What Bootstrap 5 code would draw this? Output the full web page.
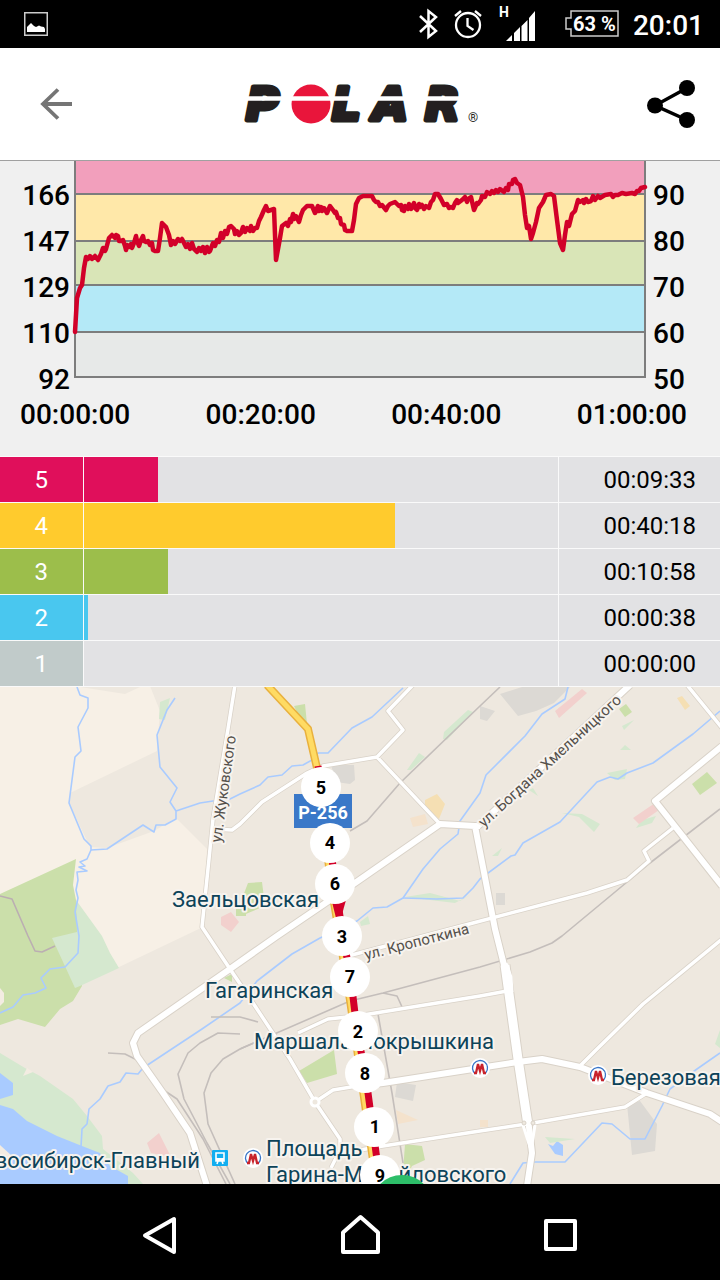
<!DOCTYPE html>
<html lang="ru">
<head>
<meta charset="utf-8">
<meta name="viewport" content="width=device-width, initial-scale=1">
<title>Polar</title>
<link rel="stylesheet" href="https://cdn.jsdelivr.net/npm/bootstrap@5.3.0/dist/css/bootstrap.min.css">
<style>
  body { font-family: Roboto, "Noto Sans", sans-serif; background: #f0f0f0; color: #000; }
  svg { display: block; }
  .status-bar { height: 48px; padding: 0 16px 0 24px; background: #000; color: #fff; }
  .status-bar svg { overflow: visible; }
  .status-time { padding-top: 3px; font-size: 28px; font-weight: 500; line-height: 32px; }
  .top-bar { height: 113px; padding: 0 24px 0 40px; background: #fff; border-bottom: 1px solid #a0a0a0; }
  .plain-btn { background: none; border: 0; padding: 0; }
  .chart-grid { display: grid; grid-template-columns: 74px 1fr 74px; height: 217px; }
  .axis-col { padding-top: 12px; font-size: 28px; font-weight: 500; line-height: 46px; }
  .axis-col.lefty { padding-right: 4px; text-align: right; }
  .axis-col.righty { padding-left: 7px; }
  .plot { width: 100%; height: 217px; overflow: visible; }
  .time-axis { height: 78px; padding: 19px 33px 0 20px; font-size: 28px; font-weight: 500; line-height: 36px; }
  .zones { width: 100%; table-layout: fixed; border-collapse: collapse; font-size: 24px; line-height: 44px; }
  .zones th, .zones td { height: 46px; padding: 0; border: solid #fafafa; border-width: 1px 0; background: #e2e2e4; }
  .zones th { width: 83px; font-weight: 400; color: #fff; text-align: center; border-right-width: 1px; background: var(--zone); }
  .zones td:last-child { width: 162px; padding-right: 24px; text-align: right; border-left-width: 1px; }
  .zone-bar { height: 45px; background: var(--zone); }
  .z5 { --zone: #e00f5b; } .z4 { --zone: #ffcb2d; } .z3 { --zone: #9cbe4b; } .z2 { --zone: #49c7ef; } .z1 { --zone: #c1cbca; }
  .map-area { flex: 1 1 0; min-height: 320px; background: #eee8df; overflow: hidden; }
  .map-area > svg { width: 100%; height: 100%; }
  .station { font-size: 22px; fill: #0d4359; stroke: #f7f3ee; stroke-width: 4px; stroke-linejoin: round; paint-order: stroke; }
  .street { font-size: 15px; fill: #54504b; stroke: #f7f3ee; stroke-width: 4px; stroke-linejoin: round; paint-order: stroke; }
  .pin { font-size: 18px; font-weight: 700; text-anchor: middle; }
  .nav-keys { height: 96px; padding: 0 100px; background: #000; }
</style>
</head>
<body class="d-flex flex-column min-vh-100">

<div class="status-bar d-flex align-items-center">
  <svg width="24" height="24" viewBox="0 0 24 24"><rect x=".75" y=".75" width="22.500" height="22.500" fill="none" stroke="#ccc" stroke-width="1.500"/><path fill="#fff" d="M3 20v-5l2-2 2-2 3 3 2 1 3-1.500 2 1 3 .5 1 2v3z"/></svg>
  <svg class="ms-auto" width="20" height="30" viewBox="0 0 20 30" fill="none" stroke="#fff" stroke-width="2.500"><path d="M1 7l16 15-7.500 6V2L17 8 1 23"/></svg>
  <svg style="margin-left:14px" width="30" height="30" viewBox="0 0 30 30" fill="none" stroke="#fff" stroke-width="2.300"><circle cx="15" cy="16" r="12"/><path d="M14.500 9v8l6 4M2 7l6-5M28 7l-6-5"/></svg>
  <svg class="ms-3" width="40" height="34" viewBox="0 0 40 34" fill="#fff"><text x="0" y="10" font-size="14" font-weight="700">H</text><path d="M7 34l6-6v6zM15 26l6-6v14h-6zM22.500 19l6-6v21h-6zM30 11l6-7v30h-6z"/></svg>
  <svg class="ms-4" width="62" height="30" viewBox="0 0 62 30"><path d="M8 2h47v25H8v-7H3V9h5z" fill="none" stroke="#ccc" stroke-width="1.500"/><text x="10" y="22" font-size="20" font-weight="700" fill="#fff">63 %</text></svg>
  <span class="status-time ms-2">20:01</span>
</div>

<header class="top-bar d-flex align-items-center justify-content-between">
  <button class="plain-btn" type="button" aria-label="Back"><svg width="32" height="32" viewBox="0 0 32 32" fill="none" stroke="#757575" stroke-width="3.800"><path d="M32 16H3M18 1.500L3 16l15 14.500"/></svg></button>
  <svg width="240" height="44" viewBox="240 82 240 44" overflow="visible" role="img" aria-label="Polar">
    <g fill="#231f20" stroke="#231f20" stroke-width="5" stroke-linejoin="round" font-family="DejaVu Sans, sans-serif" font-weight="700" font-style="italic" font-size="45">
      <text x="247" y="120">P</text><text x="333" y="120">L</text><text x="374" y="120">A</text><text x="426" y="120">R</text>
    </g>
    <circle cx="312" cy="104" r="19.500" fill="#e9153b"/>
    <path d="M240 98.500H468" stroke="#fff" stroke-width="4.500"/>
    <text x="469" y="122" font-size="13" fill="#231f20">®</text>
  </svg>
  <button class="plain-btn" type="button" aria-label="Share"><svg width="50" height="50" viewBox="0 0 50 50"><path d="M41 9L9 26.500 41 41" fill="none" stroke="#000" stroke-width="3.500"/><circle cx="41" cy="9" r="8"/><circle cx="9" cy="26.500" r="8"/><circle cx="41" cy="41" r="8"/></svg></button>
</header>

<main class="d-flex flex-column flex-grow-1">
  <section>
    <div class="chart-grid">
      <div class="axis-col lefty"><div>166</div><div>147</div><div>129</div><div>110</div><div>92</div></div>
      <svg class="plot" viewBox="74 161 572 217" preserveAspectRatio="none">
        <path fill="#f29fbc" d="M75 161h570v33H75z"/><path fill="#ffe8a9" d="M75 194h570v47H75z"/><path fill="#d9e5b7" d="M75 241h570v44H75z"/><path fill="#b4e9f7" d="M75 285h570v47H75z"/><path fill="#e7e9e8" d="M75 332h570v45H75z"/>
        <path d="M75 161V377H645V161M75 194H645M75 241H645M75 285H645M75 332H645" fill="none" stroke="#7d7d7d" stroke-width="2"/>
        <polyline fill="none" stroke="#d20029" stroke-width="4.500" stroke-linejoin="round" stroke-linecap="round" points="75,332 76,315 77,298 80,288 82,285 84,268 86,257 88,259 90,256 92,259 95,256 98,260 101,254 103,248 105,251 106,249 109,238 112,235 115,238 116,235 118,236 119,241 121,241 123,240 125,246 126,250 127,245 129,247 131,244 132,248 134,243 136,236 137,241 139,246 141,240 143,236 144,241 146,242 148,241 150,245 152,243 153,250 155,251 158,251 160,238 162,223 166,227 169,235 171,245 173,241 175,244 178,239 180,241 182,239 184,243 186,247 188,244 190,249 192,243 194,249 197,252 199,248 201,251 203,247 205,253 207,247 209,252 210,251 213,243 215,246 217,240 219,242 221,233 223,238 225,231 227,234 229,227 231,226 234,229 235,234 237,231 239,235 241,233 243,227 245,232 247,228 250,231 251,226 253,231 255,228 257,228 259,221 261,217 264,210 266,206 268,211 274,209 276,260 280,238 282,226 286,223 288,226 290,219 291,222 293,214 294,219 296,216 299,222 301,215 303,210 307,206 312,206 315,213 318,206 319,211 321,207 322,211 324,208 327,213 330,206 333,210 335,213 336,212 338,218 340,218 341,224 344,225 345,230 347,231 352,231 354,220 356,204 359,198 363,196 372,196 374,200 376,202 378,202 380,206 382,205 386,210 388,206 390,204 395,202 399,206 401,205 402,210 404,211 405,206 408,209 409,204 411,209 414,203 415,208 417,210 419,204 420,207 422,205 424,209 426,206 429,208 431,202 433,200 435,194 438,194 441,199 444,205 447,204 449,208 451,207 453,208 455,203 457,200 458,203 462,200 465,197 467,202 468,199 471,197 474,210 477,203 478,204 481,200 482,196 485,197 487,192 490,194 492,191 494,193 496,190 498,192 500,189 504,192 506,188 508,190 509,184 512,184 513,180 515,179 517,183 520,185 523,197 525,215 527,228 529,226 531,239 533,233 536,222 539,208 543,202 546,195 551,194 554,196 557,220 560,243 563,250 565,235 567,222 569,226 572,214 575,211 578,200 580,202 583,200 584,203 586,199 588,202 591,201 593,196 595,200 598,196 600,198 605,195 611,194 613,197 615,195 618,195 622,193 626,194 632,193 635,194 637,191 639,191 641,188 645,187"/>
      </svg>
      <div class="axis-col righty"><div>90</div><div>80</div><div>70</div><div>60</div><div>50</div></div>
    </div>
    <div class="time-axis d-flex justify-content-between"><span>00:00:00</span><span>00:20:00</span><span>00:40:00</span><span>01:00:00</span></div>
  </section>

  <table class="zones">
    <tbody>
      <tr class="z5"><th scope="row">5</th><td><div class="zone-bar" style="width:15.8%"></div></td><td>00:09:33</td></tr>
      <tr class="z4"><th scope="row">4</th><td><div class="zone-bar" style="width:65.8%"></div></td><td>00:40:18</td></tr>
      <tr class="z3"><th scope="row">3</th><td><div class="zone-bar" style="width:17.9%"></div></td><td>00:10:58</td></tr>
      <tr class="z2"><th scope="row">2</th><td><div class="zone-bar" style="width:1%"></div></td><td>00:00:38</td></tr>
      <tr class="z1"><th scope="row">1</th><td><div class="zone-bar" style="width:0%"></div></td><td>00:00:00</td></tr>
    </tbody>
  </table>

  <section class="map-area">
    <svg viewBox="0 687 720 497" preserveAspectRatio="xMidYMid slice">
      <!-- land -->
      <path fill="#f7f0e6" d="M0 686H150L160 711 157 751 70 793 69 803 90 847 107 848 154 831 176 818 207 849 203 927 117 968 76 985 0 900z"/>
      <path fill="#eee8df" d="M80 687h60l-15 7z"/>
      <path fill="#cbdfaa" d="M0 894L76 859 73 885 76 900 82 986 73 1001 60 1009 45 1027 18 1019 0 1025z"/>
      <path fill="#d5e8cf" d="M76 900L102 936 110 953 119 968 80 986 75 988 52 938 77 932z"/>
      <path fill="#f3ece2" d="M0 988l4 5v9l-4 4z"/>
      <path fill="#d5e8cf" d="M0 1053L25 1068 40 1076 73 1099 87 1116 102 1136 103 1149 133 1173 143 1184H0z"/>
      <path fill="#f3ece2" d="M27 1068l6 4-10 4z"/>
      <path fill="#a9cbff" d="M0 1073L13 1083V1095L0 1099zM0 1105L13 1109 27 1121 57 1136 82 1146 100 1153 110 1166 128 1176V1184H0zM548 1144l5 2 4-5 6 4v11l-8-2z"/>
      <path fill="#f3ece2" d="M0 1145l12 11-5 4-7-6z"/>
      <path fill="#cbdfaa" d="M294 706l11-2 2 20-4 1zM248 883l14-1 3 24-24 10 2-20zM299 1071l35-21 3 24-30 9zM405 1144l17 2 3 14-13 6-10 20zM619 709l7-5 6 8-7 5zM692 784l15-12 10 11-17 12zM224 978l8-4v8zM236 908h10v8h-10z"/>
      <path fill="#d5e8cf" d="M444 732l24-22 5 2-26 28-4-1zM407 770l12-17 6 4-14 13zM160 702l10-4-5 22-6-1zM622 726l12-6-10 10zM620 750l5-5 6 5zM607 773l20-4-2 10-10 1zM562 813l20 1 18 10-6 8-15-15zM492 856l10-8-4 8zM529 790l4-2 5 8zM636 828l6-8 14-4-4 7zM360 922l8-6 2 8-9 2zM545 1137l30 2-25 4zM430 893l-25 4 50 6 15-8-10 6zM720 1030v18l-5-4z"/>
      <path fill="#dcd9d4" d="M331 765h23l1 15-5 4-14-2zM480 706l15 5-8 10-7-2zM500 694l22-7h48l-16 16-18 8-18 5zM496 893h9v12h-9zM397 1082l19 3-3 16-18-4zM627 1104l13-3 17 23-2 27-23 4z"/>
      <path fill="#f2d0cd" d="M555 711L582 689l5 4-28 25zM633 818l22-15 4 7-20 14zM221 917l10-5 8 10-8 10-10-7zM147 1143l12-10 12 24-20-4z"/>
      <path fill="#f5dfb3" d="M425 800l12-6 8 10-6 15-14-12zM677 698l5-2 8 10-5 4z"/><path fill="#f4e2cc" d="M410 818l15-4 3 10-15 3zM396 1110l22 10-20 4zM480 1120h8v7h-8z"/>
      <!-- rivers -->
      <g fill="none" stroke="#a9cbff" stroke-width="1.600" stroke-linejoin="round">
        <path d="M77 687L80 695 88 698V708L78 727 81 751 75 757 69 803 84 839 91 846V850L87 859 80 862 85 866 79 867 87 871 77 872 78 880 76 890 78 898 75 912 79 936 78 953 65 967 50 969 41 978 46 988 35 993 23 995 13 1007 0 1013"/>
        <path d="M175 698L167 710 157 735 160 767 177 788 170 802 176 811V819L165 825H156L154 832 143 825 107 849 91 850M176 811L200 803 213 801 230 799 240 794 260 785 268 777 282 775 292 766 303 765 312 760 318 753H328L352 728 372 717 403 688"/>
        <path d="M568 687L565 699 542 714 525 736 486 775 480 793 460 821 458 834 440 849 423 869 403 898 387 907 373 908 357 921 320 938 292 954 257 981 240 1003 202 1029 143 1068 138 1074 126 1073 120 1082 108 1086 100 1099 89 1109 87 1124 82 1129 81 1147"/>
        <path d="M720 711L693 734 653 763 627 773 618 779 610 777 597 782 560 822 523 843 515 855 511 856 480 879 473 888 463 898 437 899 403 898M720 1053L697 1069 670 1089 662 1106 645 1139H630L612 1124 602 1123 565 1162H535L523 1163 510 1184"/>
      </g>
      <!-- railways -->
      <g fill="none" stroke="#c4bebb" stroke-width="1.600" stroke-linejoin="round">
        <path d="M500 687L480 706 400 783 367 821 350 831M720 809L650 863 562 936 552 943 530 952 480 967 383 993 350 1001 240 1049M383 993L397 996 403 1009M378 1014L392 1093 403 1163"/>
        <path d="M240 1034L218 1033 200 1043 188 1053 178 1074 184 1099 207 1143 230 1184M260 1040L240 1049 223 1059 211 1073 204 1093 208 1124 235 1184M165 1091L177 1099 203 1139 226 1184M108 1053L125 1054 137 1060M211 1017H240L258 1022"/>
        <path stroke="#bbaeb2" d="M0 896L12 899 28 936 35 951 42 952 55 946"/>
      </g>
      <!-- roads: casing, then fill -->
      <defs>
        <g id="minor">
          <path d="M235 685L228 729 213 819 209 859 202 927 230 969 253 1003 290 1059 315 1102 340 1139 340 1150 331 1168M213 829L232 830 240 824 262 802 307 773 323 766 377 757 403 730 388 711 413 685M348 956L473 923 587 893 627 880 649 861 644 851 673 828M687 685L722 728M722 939L643 1004 595 1051 580 1066M647 1093L625 1107 533 1123 480 1131 383 1146 360 1150M298 1033L328 1019 357 1016 480 996 507 991M315 1102L333 1090 357 1086M377 757L440 824"/>
        </g>
        <g id="major">
          <path d="M480 826H475L440 824 355 883 277 936 230 969 138 1033 133 1043 137 1056 163 1093 190 1133 207 1186M478 826L630 685M722 746L655 801 722 886M357 1086L383 1083 473 1069 518 1062 542 1059 580 1067 647 1093 710 1114 722 1122M475 826L495 929 505 969M528 1119L532 1153 527 1186"/>
        </g>
        <path id="trunk" d="M505 965L518 1059 528 1125"/>
      </defs>
      <g fill="none" stroke="#d9d2c8" stroke-linejoin="round"><use href="#minor" stroke-width="5"/><use href="#major" stroke-width="8"/><use href="#trunk" stroke-width="11"/></g>
      <g fill="none" stroke="#fff" stroke-linejoin="round"><use href="#minor" stroke-width="3.500"/><use href="#major" stroke-width="6"/><use href="#trunk" stroke-width="9"/>
        <path stroke-width="3" d="M506 963L511 977 512 992M523 1125L531 1150 535 1125"/><circle cx="315" cy="1102" r="4" stroke-width="3" fill="#eee8df"/></g>
      <g fill="#eee8df" stroke="#d9d2c8"><circle cx="524" cy="1123" r="2"/><circle cx="533" cy="1123" r="2"/></g>
      <!-- highway and recorded route -->
      <path d="M267 685L308 729 317 768 326 843 332 890 350 1000 373 1160" fill="none" stroke="#e9b13e" stroke-width="8"/>
      <path d="M267 685L308 729 317 768 326 843 332 890 350 1000 373 1160" fill="none" stroke="#ffdb63" stroke-width="5"/>
      <path d="M318 766L330 843 336 890 343 936 351 980 357 1030 366 1078 377 1160" fill="none" stroke="#d20029" stroke-width="7"/>
      <path fill="#d20029" d="M332 902l14-2-5 18h-5z"/>
      <!-- station and street names -->
      <g class="street">
        <text transform="translate(221 843) rotate(-82)">ул. Жуковского</text>
        <text transform="translate(484 828) rotate(-42.500)">ул. Богдана Хмельницкого</text>
        <text transform="translate(366 960) rotate(-14.500)">ул. Кропоткина</text>
      </g>
      <g class="station">
        <text x="172" y="907">Заельцовская</text><text x="205" y="998">Гагаринская</text>
        <text x="254" y="1049">Маршала Покрышкина</text><text x="611" y="1085">Березовая</text>
        <text x="200" y="1168" text-anchor="end">Новосибирск-Главный</text>
        <text x="266" y="1156">Площадь</text><text x="266" y="1182">Гарина-Михайловского</text>
      </g>
      <defs><g id="metro"><circle r="10" fill="#fff"/><circle r="7.500" fill="none" stroke="#3875c8" stroke-width="1.300" stroke-dasharray="37 10" transform="rotate(128)"/><path fill="none" stroke="#c8232c" stroke-width="2.300" d="M-6 5h3M3 5h3M-4 5L-2-4 0 3 2-4 4 5"/></g></defs>
      <use href="#metro" x="480" y="1068"/><use href="#metro" x="598" y="1075"/><use href="#metro" x="253" y="1158"/>
      <rect x="212" y="1150" width="16" height="16" rx="1" fill="#12aef0"/><path d="M216 1153h8v8h-8zM217 1164l1-3M223 1164l-1-3" fill="none" stroke="#fff" stroke-width="1.600"/><path d="M216 1158h8v3h-8z" fill="#fff"/>
      <path fill="#3a78c8" d="M294 794h58v34h-58z"/><text x="323" y="819" text-anchor="middle" font-size="18" font-weight="700" fill="#fff">P-256</text>
      <!-- kilometre pins -->
      <g fill="#fff"><circle cx="321" cy="787" r="20"/><circle cx="330" cy="843" r="20"/><circle cx="335" cy="884" r="20"/><circle cx="342" cy="936" r="20"/><circle cx="350" cy="977" r="20"/><circle cx="358" cy="1031" r="20"/><circle cx="365" cy="1073" r="20"/><circle cx="374" cy="1127" r="20"/><circle cx="380" cy="1175" r="20"/></g>
      <g class="pin"><text x="321" y="794">5</text><text x="330" y="849">4</text><text x="335" y="890">6</text><text x="342" y="943">3</text><text x="350" y="983">7</text><text x="358" y="1038">2</text><text x="365" y="1080">8</text><text x="375" y="1133">1</text><text x="380" y="1182">9</text></g>
      <circle cx="402" cy="1206" r="31" fill="#2dbe69"/>
    </svg>
  </section>
</main>

<footer class="nav-keys d-flex align-items-center justify-content-between">
  <button class="plain-btn" type="button" aria-label="Back"><svg width="120" height="48" viewBox="100 1208 120 48" fill="none" stroke="#fff" stroke-width="4" stroke-linejoin="round"><path d="M174 1219V1252L145 1235.500z"/></svg></button>
  <button class="plain-btn" type="button" aria-label="Home"><svg width="120" height="48" viewBox="300 1208 120 48" fill="none" stroke="#fff" stroke-width="4" stroke-linejoin="round"><path d="M343 1252V1232.500L360.500 1217 378 1232.500V1252z"/></svg></button>
  <button class="plain-btn" type="button" aria-label="Recent apps"><svg width="120" height="48" viewBox="500 1208 120 48" fill="none" stroke="#fff" stroke-width="4" stroke-linejoin="round"><path d="M546 1221h29v28h-29z"/></svg></button>
</footer>
<script src="https://cdn.jsdelivr.net/npm/bootstrap@5.3.0/dist/js/bootstrap.bundle.min.js"></script>
</body>
</html>
